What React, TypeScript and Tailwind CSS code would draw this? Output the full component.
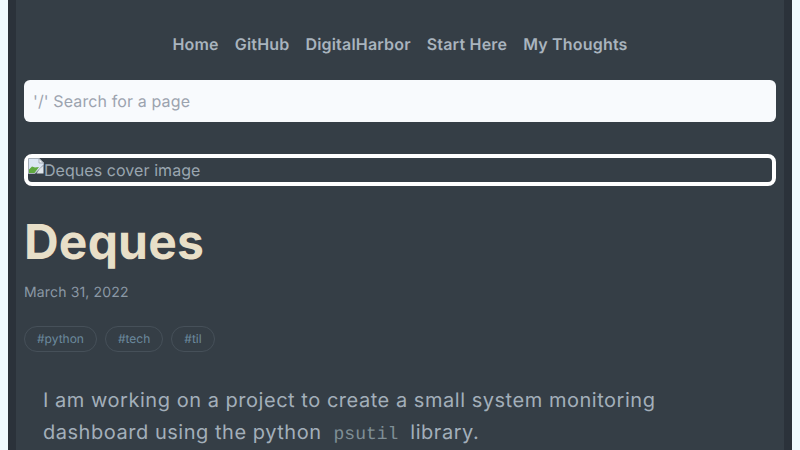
const navLinks = ['Home', 'GitHub', 'DigitalHarbor', 'Start Here', 'My Thoughts'];
const tags = ['#python', '#tech', '#til'];

function BrokenImageIcon() {
  return (
    <svg width="16" height="16" viewBox="0 0 16 16" className="shrink-0">
      <path d="M0.5 0.5H11L15.5 5V7L7 15.5H0.5Z" fill="#dbe6f3" stroke="#a4adb6" />
      <path d="M11 0.5V5H15.5Z" fill="#f6f8fa" stroke="#a4adb6" />
      <path d="M1 15V11.5L4 8.5L7 9.5L11 9L6.5 15Z" fill="#5fa83f" />
      <path d="M12 10.5L15.5 7.5V15.5H8.5Z" fill="#dfe5ea" />
    </svg>
  );
}

export default function App() {
  return (
    <div className="h-[450px] overflow-hidden bg-[#f0fbff] px-2 font-['Inter',sans-serif] [text-rendering:geometricPrecision]">
      <div className="h-full border-x-8 border-[#2b323a] bg-[#353e46] px-2">
        <nav className="flex h-[80px] items-start justify-center gap-4 pt-[32px] text-base font-semibold leading-6 tracking-[0.19px] text-[#a9b4be]">
          {navLinks.map(link => (
            <a key={link}>{link}</a>
          ))}
        </nav>
        <div className="flex h-[42px] items-center rounded-md bg-[#f8fafd] px-[9px] text-base tracking-[0.12px] text-[#9ca3af]">
          '/' Search for a page
        </div>
        <div className="mt-8 flex h-8 items-start rounded-lg border-4 border-white text-base leading-6 tracking-[0.06px] text-[#9aa6b0]">
          <BrokenImageIcon />
          <span>Deques cover image</span>
        </div>
        <h1 className="mt-[26px] text-5xl leading-[60px] font-bold tracking-[0.2px] text-[#e8dfc8]">Deques</h1>
        <p className="mt-[11px] text-sm leading-5 tracking-[0.15px] text-[#8b98a5]">March 31, 2022</p>
        <div className="mt-[23px] flex gap-2">
          {tags.map(tag => (
            <span key={tag} className="flex h-[26px] items-center rounded-full border border-[#465059] px-3 text-xs text-[#6c8a9e]">
              {tag}
            </span>
          ))}
        </div>
        <p className="mt-8 max-w-[640px] pl-[19px] text-xl leading-8 tracking-[0.53px] text-[#a3afba]">
          I am working on a project to create a small system monitoring dashboard using the python
          <code className="mx-3 font-['Liberation_Mono',monospace] text-lg tracking-normal text-[#7f8e95]">psutil</code>
          library.
        </p>
      </div>
    </div>
  );
}
